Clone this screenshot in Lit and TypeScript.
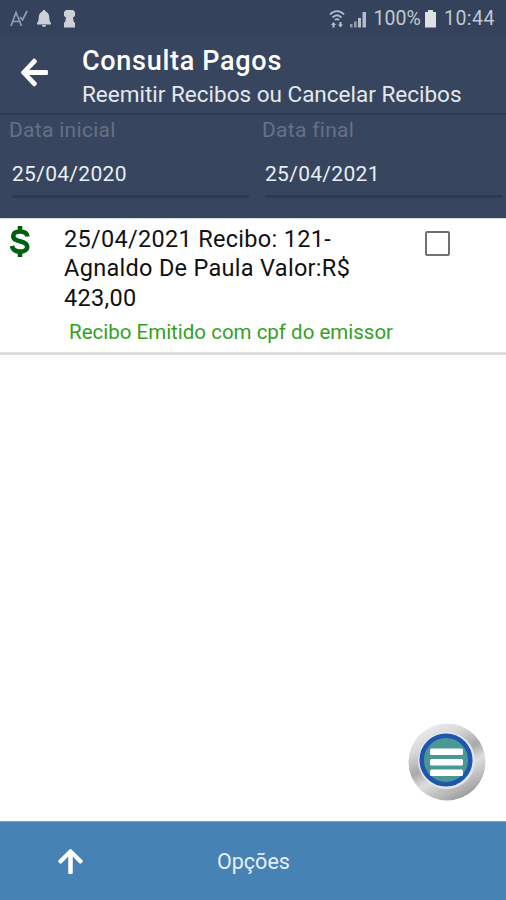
import { LitElement, html, css, svg } from "lit";
import { customElement } from "lit/decorators.js";

const arrow = svg`<path fill="#fff" d="M257.5 445.1l-22.2 22.2c-9.4 9.4-24.6 9.4-33.9 0L7 273c-9.4-9.4-9.4-24.6 0-33.9L201.4 44.7c9.4-9.4 24.6-9.4 33.9 0l22.2 22.2c9.5 9.5 9.3 25-.4 34.3L136.6 216H424c13.3 0 24 10.7 24 24v32c0 13.3-10.7 24-24 24H136.6l120.5 114.8c9.8 9.3 10 24.8.4 34.3z"/>`;

@customElement("app-root")
export class AppRoot extends LitElement {
  static styles = css`
    :host { display: flex; flex-direction: column; height: 900px; width: 506px; overflow: hidden;
      background: #fff; font-family: Roboto, "Noto Sans", sans-serif; white-space: nowrap; }
    * { box-sizing: border-box; }
    svg { display: block; flex: none; }
    .status { height: 36px; flex: none; background: #34425c; color: #c2c8d1; display: flex; align-items: center;
      padding: 0 11px 0 10px; font-size: 19.5px; }
    .left { display: flex; flex: 1; }
    .pct { margin-left: 4px; letter-spacing: .1px; }
    .time { margin-left: 5px; letter-spacing: .5px; }
    .bar { height: 77px; flex: none; background: #37465e; display: flex; color: #fff; padding-left: 21px; }
    .back { margin-top: 20px; }
    .titles { margin-left: 34px; padding-top: 8px; }
    .title { font-size: 27px; font-weight: 500; line-height: 34px; letter-spacing: .7px; }
    .sub { font-size: 22.5px; line-height: 30px; margin-top: 1px; color: #e4e8ee; }
    .dates { height: 105px; flex: none; background: #37465e; border-top: 2px solid #2c3c53; display: grid;
      grid-template-columns: 253px 253px; }
    .field { padding: 3px 4px 0 9px; }
    .label { font-size: 21px; line-height: 25px; color: #657186; letter-spacing: .3px; }
    .date { margin-left: 3px; margin-top: 11px; height: 44px; border-bottom: 3px solid #2b3b54; font-size: 21px;
      line-height: 41px; color: #e9edf4; letter-spacing: .3px; }
    .row { height: 137px; flex: none; border-top: 1px solid #dcd9e5; border-bottom: 3px solid #dedede; display: flex;
      padding: 0 0 0 10px; position: static; }
    .money { margin-top: 6px; }
    .body { width: 361px; margin-left: 34px; padding-top: 6px; }
    .text { font-size: 23.5px; line-height: 29.3px; color: #111; white-space: pre-line; letter-spacing: .3px; }
    .note { margin: 7px 0 0 5px; font-size: 20.5px; line-height: 24px; color: #35a11f; }
    .check { width: 25px; height: 25px; margin-top: 12px; border: 2.5px solid #717171; border-radius: 2px; }
    .space { flex: 1; display: flex; align-items: flex-end; justify-content: flex-end; padding: 0 18px 20px 0; }
    .footer { height: 79px; flex: none; border-top: 1px solid #78a6ca; background: #4682b4; display: flex;
      align-items: center; color: #e4eff8; font-size: 21.5px; }
    .up { margin-left: 58px; transform: rotate(90deg); }
    .opt { margin-left: 134px; padding-top: 1px; }
  `;

  field(label: string, value: string) {
    return html`<div class="field"><div class="label">${label}</div><div class="date">${value}</div></div>`;
  }

  render() {
    return html`
      <div class="status">
        <div class="left">
          <svg width="68" height="22" viewBox="0 0 68 22">
            <path d="M1 19 6 5.500 11.500 19M3 14.500h7M10 10l2.500 3L17 4" fill="none" stroke="#939daf" stroke-width="1.700"/>
            <path fill="#ccd1d8" d="M34 3c1 0 1.500.6 1.600 1.500C38.300 5.300 39.300 8 39.300 11c0 3 .5 3.500 1.700 5v1.500H27V16c1.200-1.500 1.700-2 1.700-5 0-3 1-5.700 3.700-6.500C32.500 3.600 33 3 34 3zm-2 15h4c0 2.500-4 2.500-4 0z"/>
            <path fill="#ccd1d8" d="M56 3h7l2 2v4l-2 1.500.6 4L65 16v4.500H54V16l1.300-1.500.7-4L54 9V5z"/>
          </svg>
        </div>
        <svg width="40" height="22" viewBox="0 0 40 22">
          <g fill="none" stroke="#b5bdc8" stroke-width="1.800">
            <path d="M1 7.500C5 3 11 3 15 7.500M3.500 10.500c3-3 6-3 9 0M6 13c1.500-1.300 2.500-1.300 4 0"/>
          </g>
          <path fill="#b5bdc8" d="M4.500 15 7 18H5.500v2.500h-2V18H2zM9 17.500h1.500V15h2v2.500H14l-2.500 3z"/>
          <path fill="#8f9aab" d="M21 17h2.500v3.500H21zM25 14.500h2.700v6H25z"/>
          <path fill="#b5bdc8" d="M29 11h3v9.500h-3zM33.500 5H37v15.500h-3.500z"/>
        </svg>
        <span class="pct">100%</span>
        <svg width="18" height="22" viewBox="0 0 18 22"><path fill="#dee1e6" d="M7 3h5v2h3v15.500H4V5h3z"/></svg>
        <span class="time">10:44</span>
      </div>
      <div class="bar">
        <svg class="back" width="27" height="33" viewBox="0 0 448 512" preserveAspectRatio="none">${arrow}</svg>
        <div class="titles">
          <div class="title">Consulta Pagos</div>
          <div class="sub">Reemitir Recibos ou Cancelar Recibos</div>
        </div>
      </div>
      <div class="dates">
        ${this.field("Data inicial", "25/04/2020")}${this.field("Data final", "25/04/2021")}
      </div>
      <div class="row">
        <svg class="money" width="20" height="33" viewBox="0 0 20 33">
          <path fill="none" stroke="#00600f" stroke-width="4.600" d="M17.500 11.500C17 7.800 14 6.500 10 6.500c-4 0-6.700 1.600-6.700 4.700 0 3.300 3 4.100 6.700 5 4.300 1 7.200 2.200 7.200 5.500 0 3.200-3.200 4.900-7.200 4.900-4.500 0-7.300-1.800-8-5.600M10 1v6M10 26v6"/>
        </svg>
        <div class="body">
          <div class="text">${"25/04/2021 Recibo: 121-\nAgnaldo De Paula Valor:R$\n423,00"}</div>
          <div class="note">Recibo Emitido com cpf do emissor</div>
        </div>
        <div class="check"></div>
      </div>
      <div class="space">
        <svg width="80" height="80" viewBox="0 0 80 80">
          <defs>
            <linearGradient id="metal" x1=".2" y1="0" x2=".7" y2="1">
              <stop offset="0" stop-color="#f1f1f1"/><stop offset=".25" stop-color="#d8d8d8"/>
              <stop offset=".48" stop-color="#a9a9a9"/><stop offset=".65" stop-color="#dedede"/>
              <stop offset=".85" stop-color="#b7b7b7"/><stop offset="1" stop-color="#929996"/>
            </linearGradient>
          </defs>
          <circle cx="39" cy="41" r="38.500" fill="url(#metal)"/>
          <circle cx="38.500" cy="39.500" r="28.500" fill="#e2e6f0"/>
          <circle cx="38" cy="39" r="24.300" fill="#4b9794" stroke="#1f56ad" stroke-width="4.500"/>
          <g fill="#fff"><rect x="22" y="27.500" width="33" height="6.500" rx="1.500"/><rect x="22" y="38" width="33" height="6.500" rx="1.500"/><rect x="22" y="48.500" width="33" height="6.500" rx="1.500"/></g>
        </svg>
      </div>
      <div class="footer">
        <svg class="up" width="25" height="29" viewBox="0 0 448 512" preserveAspectRatio="none">${arrow}</svg>
        <span class="opt">Opções</span>
      </div>`;
  }
}
